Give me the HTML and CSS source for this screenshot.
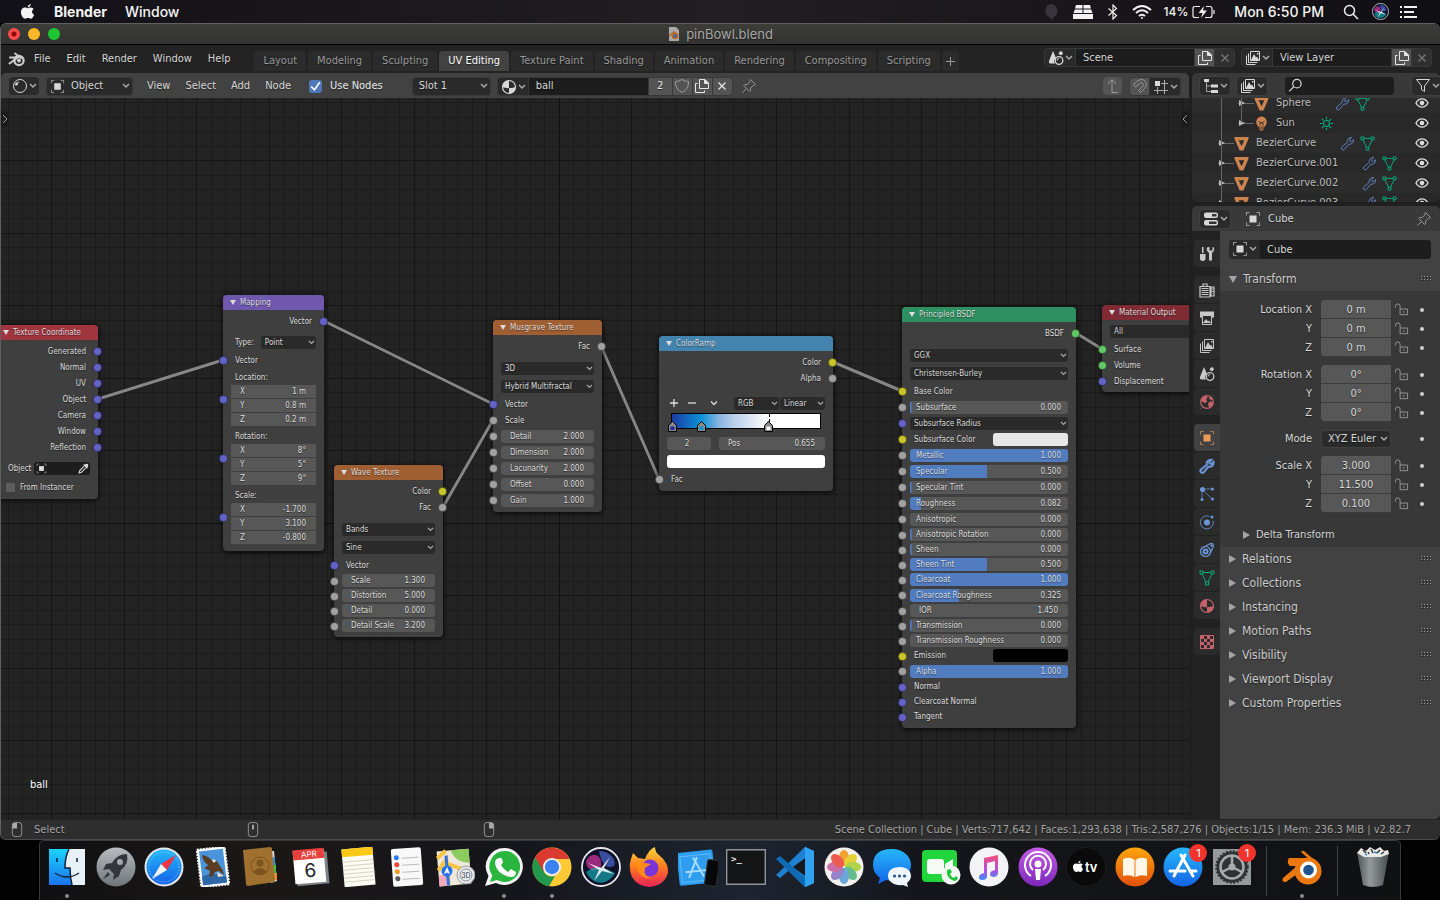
FILE: index.html
```html
<!DOCTYPE html>
<html lang="en">
<head>
<meta charset="utf-8">
<title>pinBowl.blend</title>
<link rel="stylesheet" href="styles.css">
</head>
<body>
<svg class="defs" aria-hidden="true">
  <symbol id="object" viewBox="0 0 16 16"><path d="M4.500 4.500h7v7h-7z" fill="currentColor"/><path d="M1.500 4.500v-3h3M11.500 1.500h3v3M14.500 11.500v3h-3M4.500 14.500h-3v-3" fill="none" stroke="currentColor" opacity=".65"/></symbol>
  <symbol id="dup" viewBox="0 0 16 16" fill="none" stroke="currentColor"><path d="M5.500 1.500h5.500l3.500 3.500v5.500h-9z"/><path d="M10.500 1.500v4h4z" fill="currentColor"/><path d="M3.500 5.500h-2v9h9v-2"/></symbol>
  <symbol id="close" viewBox="0 0 16 16"><path d="M4.500 4.500l7 7M11.500 4.500l-7 7" stroke="currentColor" stroke-width="1.300"/></symbol>
  <symbol id="pin" viewBox="0 0 16 16" fill="none" stroke="currentColor"><path d="M9.500 1.500l5 5-1 1-1-.3-3 3 .2 2.300-1 1-6-6 1-1 2.300.2 3-3-.4-1z"/><path d="M5.500 10.500l-4 4"/></symbol>
  <symbol id="wrench" viewBox="0 0 16 16" fill="none" stroke="currentColor"><path d="M12.500 1.800a4 4 0 0 0-4.700 5L2 11.500a1.900 1.900 0 1 0 2.700 2.700L9.500 8.600a4 4 0 0 0 5-4.700L12.300 6 10.500 5.500 10.200 4z"/></symbol>
  <symbol id="mesh" viewBox="0 0 16 16" fill="none" stroke="currentColor"><path d="M1 1h3v3H1zM12 1h3v3h-3zM6.500 12h3v3h-3zM4 2.500h8M3 4l4 8M13 4l-4 8"/></symbol>
  <symbol id="cone" viewBox="0 0 16 16"><path d="M.5 1h15v2L10 15.500H6L.5 3zM5 4.500l3 6.500 3-6.500z" fill="currentColor" fill-rule="evenodd"/></symbol>
  <symbol id="bulb" viewBox="0 0 16 16"><path d="M8 .5a6 6 0 0 0-4 10l.5 1h7l.5-1A6 6 0 0 0 8 .5z" fill="currentColor"/><path d="M5 5.500l1.500 1.500h3L11 5.500M6.500 7v3M9.500 7v3" stroke="#282828" fill="none"/><path d="M5 12.800h6M6 14.800h4" stroke="currentColor" stroke-width="1.200"/></symbol>
  <symbol id="sun" viewBox="0 0 16 16" fill="none" stroke="currentColor" stroke-width="1.200"><circle cx="8" cy="8" r="3.200"/><path d="M8 1v2.500M8 12.500V15M1 8h2.500M12.500 8H15M3 3l2 2M11 11l2 2M13 3l-2 2M5 11l-2 2"/></symbol>
  <symbol id="eye" viewBox="0 0 16 16"><path d="M2 8c3-5.500 9-5.500 12 0-3 5.500-9 5.500-12 0z" fill="none" stroke="currentColor" stroke-width="1.400"/><circle cx="8" cy="8" r="2.300" fill="currentColor"/></symbol>
  <symbol id="lock" viewBox="0 0 16 16" fill="none" stroke="currentColor"><path d="M6.500 7.500h8v6h-8zM10.500 9.500v2M1.500 6V4.500a2.500 2.500 0 0 1 5 0v3"/></symbol>
  <symbol id="grip" viewBox="0 0 12 6"><path d="M0 1.500h1M3 1.500h1M6 1.500h1M9 1.500h1M0 4.500h1M3 4.500h1M6 4.500h1M9 4.500h1" stroke="#1c1c1c"/><path d="M1 .5h1M4 .5h1M7 .5h1M10 .5h1M1 3.500h1M4 3.500h1M7 3.500h1M10 3.500h1" stroke="#999"/></symbol>
  <symbol id="layers" viewBox="0 0 16 16"><path d="M5.500 1.500h9v9h-9z" fill="none" stroke="currentColor"/><path d="M6 10l3-6 2 3.500 1-1L14 10zM12 3h1.500v1.500H12z" fill="currentColor"/><path d="M3.500 3.500v9h9M1.500 5.500v9h9" fill="none" stroke="currentColor"/></symbol>
  <symbol id="scene" viewBox="0 0 16 16"><path d="M5 1l3 7a4 4 0 0 0-1 5.500H2.500Q.5 13.500 1 11z" fill="currentColor"/><circle cx="11" cy="10.500" r="3.800" fill="none" stroke="currentColor" stroke-width="1.300"/><circle cx="12.800" cy="3.200" r="1.900" fill="currentColor"/><path d="M9 10.500a2 2 0 0 1 2-2" stroke="currentColor" fill="none"/></symbol>
  <symbol id="material" viewBox="0 0 16 16"><circle cx="8" cy="8" r="6.500" fill="none" stroke="currentColor" stroke-width="1.200"/><path d="M8 8V1.500A6.500 6.500 0 0 0 1.500 8q3 1.500 6.500 1v5.500A6.500 6.500 0 0 0 14.500 8Q12 9.200 8 9z" fill="currentColor"/></symbol>
  <symbol id="search" viewBox="0 0 16 16" fill="none" stroke="currentColor" stroke-width="1.300"><circle cx="9.500" cy="6" r="4.500"/><path d="M6.200 9.300l-5 5"/></symbol>
  <symbol id="blend" viewBox="0 0 20 16"><path d="M3 6.500h8M8 2.500l6 4.500M2.500 12.500L10 7" stroke="currentColor" stroke-width="2" stroke-linecap="round"/><circle cx="12" cy="9.500" r="4.600" fill="none" stroke="currentColor" stroke-width="2.200"/><circle cx="12" cy="9.500" r="2" fill="currentColor"/></symbol>
  <symbol id="house" viewBox="0 0 9 11"><path d="M.5 4.500L4.500.5l4 4v6h-8z" fill="#8a8a8a" stroke="#000"/><path d="M2.500 5.500h4v3.500h-4z" fill="currentColor"/></symbol>
  <symbol id="siri" viewBox="0 0 40 40"><circle cx="20" cy="20" r="19" fill="#0d1026" stroke="#e4e4ea" stroke-width="1.800"/><path d="M5 14C10 4 22 6 20 21 14 25 5 24 5 14z" fill="#b4308c" opacity=".85"/><path d="M18 4c10 0 18 8 15 15-6 3-12 1-15-15z" fill="#5f7fff" opacity=".55"/><path d="M5 25c10-8 20-4 29 1-6 12-22 14-29-1z" fill="#18bfc8" opacity=".6"/><path d="M20 21L7 16l11 7-5 11 8-10 12 3-10-6 6-11z" fill="#fff" opacity=".85"/></symbol>
  <symbol id="apple" viewBox="0 0 16 18"><path d="M11.500 1c0 2-1.500 3.500-3.200 3.600C8 3 9.700 1.200 11.500 1zM8.200 5.500c.9 0 2-.9 3.400-.8 1.300.1 2.300.6 3 1.600-2.600 1.700-2.200 5 .5 6.100-.8 2-2.200 4.300-3.600 4.300-1.200 0-1.600-.7-3-.7s-1.900.7-3 .7C3.200 16.700 1 12.800 1 9.800 1 6.600 3 4.800 5.100 4.800c1.300 0 2.300.7 3.100.7z" fill="currentColor"/></symbol>
</svg>

<header class="menubar">
  <svg class="apple" viewBox="0 0 16 18"><use href="#apple"/></svg>
  <strong>Blender</strong><span>Window</span>
  <div class="tray">
    <svg width="16" height="18" viewBox="0 0 16 18"><path d="M8 1a7 7 0 0 1 3 13l-2 3-2-2.500A7 7 0 0 1 8 1z" fill="#37343b"/></svg>
    <svg width="22" height="16" viewBox="0 0 22 16" fill="#f2f2f2"><path d="M4 1h6.500v3.500H3zM11.500 1H18l1 3.500h-7.500zM2.800 5.500h7.700V9H1.500zM11.500 5.500h7.700L20.500 9h-9zM1 10h20v5H1z"/></svg>
    <svg width="12" height="16" viewBox="0 0 12 16" fill="none" stroke="#eee" stroke-width="1.200"><path d="M1.500 4.500l8 7L6 15V1l3.500 3.500-8 7"/></svg>
    <svg width="20" height="16" viewBox="0 0 20 16" fill="none" stroke="#f2f2f2" stroke-width="2"><path d="M1 6q9-8 18 0M4 9q6-5.500 12 0M7 12q3-2.500 6 0"/><circle cx="10" cy="14" r="1" fill="#f2f2f2" stroke="none"/></svg>
    <span class="charge">14%</span>
    <svg class="battery" width="24" height="14" viewBox="0 0 24 14" fill="none" stroke="#eee" stroke-width="1.200"><path d="M8 1.500H3Q1 1.500 1 3.500v7q0 2 2 2h4M14 1.500h4q2 0 2 2v7q0 2-2 2h-5"/><path d="M12 1L6.500 8h4L9 13l6-7.500h-4z" fill="#eee" stroke="none"/><path d="M22 5v4"/></svg>
    <span class="clock">Mon 6:50 PM</span>
    <svg width="16" height="16" viewBox="0 0 16 16" fill="none" stroke="#eee" stroke-width="1.500"><circle cx="6.500" cy="6.500" r="5"/><path d="M10 10l5 5"/></svg>
    <svg width="17" height="17"><use href="#siri"/></svg>
    <svg width="18" height="14" viewBox="0 0 18 14" stroke="#f2f2f2" stroke-width="2"><path d="M0 2h2M4 2h13M0 7h2M4 7h10M0 12h2M4 12h13"/></svg>
  </div>
</header>

<main class="window">
  <div class="titlebar">
    <div class="lights"><button class="light red" aria-label="Close"></button><button class="light yellow" aria-label="Minimise"></button><button class="light green" aria-label="Zoom"></button></div>
    <svg width="12" height="14" viewBox="0 0 12 14"><path d="M1 0h7l3 3v11H1z" fill="#aaa"/><path d="M1 9l5-4 4 3" fill="none" stroke="#b86a20" stroke-width="1.500"/><circle cx="7" cy="9" r="2.600" fill="#45689c" stroke="#c06a20" stroke-width="1.400"/></svg>
    <h1>pinBowl.blend</h1>
  </div>

  <nav class="topbar">
    <div class="menus">
      <svg class="logo" width="20" height="16"><use href="#blend"/></svg>
      <button>File</button><button>Edit</button><button>Render</button><button>Window</button><button>Help</button>
    </div>
    <div class="tabs">
      <button>Layout</button><button>Modeling</button><button>Sculpting</button><button class="active">UV Editing</button><button>Texture Paint</button><button>Shading</button><button>Animation</button><button>Rendering</button><button>Compositing</button><button>Scripting</button><button class="plus" aria-label="Add workspace"><svg width="9" height="9" viewBox="0 0 9 9"><path d="M4.500 0v9M0 4.500h9" stroke="#999"/></svg></button>
    </div>
    <div class="blocks">
      <div class="group scene"><button class="pick" aria-label="Browse scene"><svg><use href="#scene"/></svg></button><input aria-label="Scene name" value="Scene"><button class="sq" aria-label="New scene"><svg><use href="#dup"/></svg></button><button class="sq off" aria-label="Delete scene"><svg><use href="#close"/></svg></button></div>
      <div class="group scene"><button class="pick" aria-label="Browse view layer"><svg><use href="#layers"/></svg></button><input aria-label="View layer name" value="View Layer"><button class="sq" aria-label="New view layer"><svg><use href="#dup"/></svg></button><button class="sq off" aria-label="Delete view layer"><svg><use href="#close"/></svg></button></div>
    </div>
  </nav>

  <div class="areas">
    <section class="editor">
      <div class="toolbar">
        <button class="pick" aria-label="Editor type"><svg viewBox="0 0 16 16" fill="none" stroke="currentColor"><circle cx="8" cy="8" r="6.500"/><path d="M4 7.500q0-3 3-3.500"/><circle cx="4.500" cy="6" r="1" fill="currentColor"/></svg></button>
        <div class="mode"><svg><use href="#object"/></svg><select aria-label="Shader type"><option>Object</option></select></div>
        <div class="links"><button>View</button><button>Select</button><button>Add</button><button>Node</button></div>
        <label class="check"><input type="checkbox" checked>Use Nodes</label>
        <select class="slot" aria-label="Material slot"><option>Slot 1</option></select>
        <div class="group mat"><button class="pick" aria-label="Browse material"><svg><use href="#material"/></svg></button><input aria-label="Material name" value="ball"><button class="sq users">2</button><button class="sq" aria-label="Fake user"><svg class="dim" viewBox="0 0 16 16" fill="none" stroke="currentColor"><path d="M8 1.500Q5 3.500 1.500 3.500 1 11 8 14.500 15 11 14.500 3.500 11 3.500 8 1.500z"/></svg></button><button class="sq" aria-label="New material"><svg><use href="#dup"/></svg></button><button class="sq" aria-label="Unlink material"><svg><use href="#close"/></svg></button></div>
        <button class="bare" aria-label="Pin"><svg><use href="#pin"/></svg></button>
        <div class="right">
          <button class="sq dim solo" aria-label="Parent node tree"><svg viewBox="0 0 16 16" fill="none" stroke="currentColor"><path d="M3 6l4-4.500L11 6M7 2v12.500h6"/></svg></button>
          <div class="group snap"><button class="sq dim" aria-label="Snap"><svg viewBox="0 0 16 16" fill="none" stroke="currentColor"><path d="M1.500 6.500l4-3.500c6-4.500 12 2.500 7 7.500l-4 4-2-2 4-4c2-2.500-.5-5-3-3L3.500 9z"/></svg></button><button class="pick" aria-label="Snap element"><svg viewBox="0 0 16 16"><path d="M2 2h5v5H2z" fill="currentColor"/><path d="M4.500 8v7M11.500 1v14M8 4.500h7M1 11.500h14" stroke="currentColor" opacity=".75"/></svg></button></div>
        </div>
      </div>

      <div class="canvas">
        <svg class="grid" width="100%" height="100%">
          <defs><pattern id="lines" x="50" y="62" width="145" height="145" patternUnits="userSpaceOnUse">
            <path d="M15.500 0v145M29.500 0v145M44.500 0v145M58.500 0v145M87.500 0v145M102.500 0v145M116.500 0v145M131.500 0v145M0 15.500h145M0 29.500h145M0 44.500h145M0 58.500h145M0 87.500h145M0 102.500h145M0 116.500h145M0 131.500h145" stroke="#1b1b1b"/>
            <path d="M.5 0v145M73.500 0v145M0 .5h145M0 73.500h145" stroke="#151515"/>
          </pattern></defs>
          <rect width="100%" height="100%" fill="url(#lines)"/>
          <path d="M558.500 0v2000M0 425.500h4000" stroke="#101010"/>
          <g fill="none" stroke="#1a1a1a" stroke-width="4"><path id="wires" d="M97 301L222 262M323 223L492 306M442 409L492 322M600 248L658 381M832 264L901 293M1075 235L1101 251"/></g>
          <use href="#wires" class="wire"/>
        </svg>

        <article class="node texcoord">
          <h2>Texture Coordinate</h2>
          <div class="body">
            <p class="row out blue">Generated</p><p class="row out blue">Normal</p><p class="row out blue">UV</p><p class="row out blue">Object</p><p class="row out blue">Camera</p><p class="row out blue">Window</p><p class="row out blue">Reflection</p>
            <div class="row target space-5"><span>Object</span><button class="eyedrop" aria-label="Object"><svg><use href="#object"/></svg><svg viewBox="0 0 16 16"><path d="M10 2.500Q12 0 14.500 1.500 16 4 13.500 6l1 1-1.500 1.500L7.500 3 9 1.500z" fill="currentColor"/><path d="M8.500 5L2.500 11l-1 3.500L5 13.500 11 7.500" fill="none" stroke="currentColor" stroke-width="1.500"/></svg></button></div>
            <label class="row instancer space-3"><input type="checkbox">From Instancer</label>
          </div>
        </article>

        <article class="node mapping">
          <h2>Mapping</h2>
          <div class="body">
            <p class="row out blue">Vector</p>
            <label class="row type space-5">Type:<select><option>Point</option></select></label>
            <p class="row in blue space-2">Vector</p>
            <p class="row head space-1">Location:</p>
            <div class="triple"><label class="field">X<input value="1 m"></label><label class="field">Y<input value="0.8 m"></label><label class="field">Z<input value="0.2 m"></label></div>
            <p class="row head tight space-2">Rotation:</p>
            <div class="triple"><label class="field">X<input value="8°"></label><label class="field">Y<input value="5°"></label><label class="field">Z<input value="9°"></label></div>
            <p class="row head tight space-2">Scale:</p>
            <div class="triple"><label class="field">X<input value="-1.700"></label><label class="field">Y<input value="3.100"></label><label class="field">Z<input value="-0.800"></label></div>
          </div>
        </article>

        <article class="node wave">
          <h2>Wave Texture</h2>
          <div class="body">
            <p class="row out yellow">Color</p><p class="row out gray">Fac</p>
            <div class="row tall space-5"><select aria-label="Wave type"><option>Bands</option></select></div>
            <div class="row tall"><select aria-label="Wave profile"><option>Sine</option></select></div>
            <p class="row in blue space-1">Vector</p>
            <div class="row in gray tight"><label class="field">Scale<input value="1.300"></label></div>
            <div class="row in gray tight"><label class="field">Distortion<input value="5.000"></label></div>
            <div class="row in gray tight"><label class="field">Detail<input value="0.000"></label></div>
            <div class="row in gray tight"><label class="field">Detail Scale<input value="3.200"></label></div>
          </div>
        </article>

        <article class="node musgrave">
          <h2>Musgrave Texture</h2>
          <div class="body">
            <p class="row out gray">Fac</p>
            <div class="row tall space-5"><select aria-label="Dimensions"><option>3D</option></select></div>
            <div class="row tall"><select aria-label="Musgrave type"><option>Hybrid Multifractal</option></select></div>
            <p class="row in blue space-1">Vector</p><p class="row in gray">Scale</p>
            <div class="row in gray"><label class="field">Detail<input value="2.000"></label></div>
            <div class="row in gray"><label class="field">Dimension<input value="2.000"></label></div>
            <div class="row in gray"><label class="field">Lacunarity<input value="2.000"></label></div>
            <div class="row in gray"><label class="field">Offset<input value="0.000"></label></div>
            <div class="row in gray"><label class="field">Gain<input value="1.000"></label></div>
          </div>
        </article>

        <article class="node ramp">
          <h2>ColorRamp</h2>
          <div class="body">
            <p class="row out yellow">Color</p><p class="row out gray">Alpha</p>
            <div class="tools">
              <button aria-label="Add stop"><svg viewBox="0 0 8 8"><path d="M4 0v8M0 4h8" stroke="currentColor" stroke-width="1.300"/></svg></button>
              <button aria-label="Remove stop"><svg viewBox="0 0 8 8"><path d="M0 4h8" stroke="currentColor" stroke-width="1.300"/></svg></button>
              <button aria-label="Tools"><svg viewBox="0 0 8 8"><path d="M1 2.500l3 3 3-3" fill="none" stroke="currentColor" stroke-width="1.300"/></svg></button>
              <div class="pair"><select aria-label="Color mode"><option>RGB</option></select><select aria-label="Interpolation"><option>Linear</option></select></div>
            </div>
            <div class="gradient">
              <svg class="stop navy" style="left:1%"><use href="#house"/></svg>
              <svg class="stop sky" style="left:20%"><use href="#house"/></svg>
              <svg class="stop white" style="left:65.5%"><use href="#house"/></svg>
            </div>
            <div class="stopinfo"><input class="index" aria-label="Active stop" value="2"><label class="field">Pos<input value="0.655"></label></div>
            <input class="swatch full" type="color" value="#ffffff" aria-label="Stop color">
            <p class="row in gray space-3">Fac</p>
          </div>
        </article>

        <article class="node bsdf">
          <h2>Principled BSDF</h2>
          <div class="body">
            <p class="row out lime">BSDF</p>
            <div class="row tall space-5"><select aria-label="Distribution"><option>GGX</option></select></div>
            <div class="row tall"><select aria-label="Subsurface method"><option>Christensen-Burley</option></select></div>
            <p class="row in yellow space-1">Base Color</p>
            <div class="row in gray"><label class="field slide" style="--fill:1%">Subsurface<input value="0.000"></label></div>
            <div class="row in blue"><select aria-label="Subsurface Radius"><option>Subsurface Radius</option></select></div>
            <label class="row in yellow color">Subsurface Color<input class="swatch" type="color" value="#e7e7e7"></label>
            <div class="row in gray"><label class="field slide" style="--fill:100%">Metallic<input value="1.000"></label></div>
            <div class="row in gray"><label class="field slide" style="--fill:49%">Specular<input value="0.500"></label></div>
            <div class="row in gray"><label class="field slide" style="--fill:1%">Specular Tint<input value="0.000"></label></div>
            <div class="row in gray"><label class="field slide" style="--fill:7%">Roughness<input value="0.082"></label></div>
            <div class="row in gray"><label class="field slide" style="--fill:0%">Anisotropic<input value="0.000"></label></div>
            <div class="row in gray tight"><label class="field slide" style="--fill:1%">Anisotropic Rotation<input value="0.000"></label></div>
            <div class="row in gray tight"><label class="field slide" style="--fill:1%">Sheen<input value="0.000"></label></div>
            <div class="row in gray tight"><label class="field slide" style="--fill:49%">Sheen Tint<input value="0.500"></label></div>
            <div class="row in gray tight"><label class="field slide" style="--fill:100%">Clearcoat<input value="1.000"></label></div>
            <div class="row in gray"><label class="field slide" style="--fill:31%">Clearcoat Roughness<input value="0.325"></label></div>
            <div class="row in gray tight"><label class="field">IOR<input value="1.450"></label></div>
            <div class="row in gray tight"><label class="field slide" style="--fill:1%">Transmission<input value="0.000"></label></div>
            <div class="row in gray tight"><label class="field slide" style="--fill:0%">Transmission Roughness<input value="0.000"></label></div>
            <label class="row in yellow tight color">Emission<input class="swatch" type="color" value="#000000"></label>
            <div class="row in gray"><label class="field slide" style="--fill:100%">Alpha<input value="1.000"></label></div>
            <p class="row in blue tight">Normal</p><p class="row in blue tight">Clearcoat Normal</p><p class="row in blue tight">Tangent</p>
          </div>
        </article>

        <article class="node output">
          <h2>Material Output</h2>
          <div class="body">
            <div class="row tall"><select aria-label="Target"><option>All</option></select></div>
            <p class="row in lime space-1">Surface</p><p class="row in lime">Volume</p><p class="row in blue">Displacement</p>
          </div>
        </article>

        <button class="edge left" aria-label="Show toolbar"><svg viewBox="0 0 6 10"><path d="M1 1l4 4-4 4" fill="none" stroke="currentColor"/></svg></button>
        <button class="edge rightside" aria-label="Show sidebar"><svg viewBox="0 0 6 10"><path d="M5 1L1 5l4 4" fill="none" stroke="currentColor"/></svg></button>
        <span class="caption">ball</span>
      </div>
    </section>

    <aside class="side">
      <section class="outliner">
        <div class="toolbar">
          <button class="pick" aria-label="Editor type"><svg viewBox="0 0 16 16"><path d="M1 1h5v3H1zM8 6.500h7v3H8zM8 12h7v3H8z" fill="currentColor"/><path d="M3.500 4v9.500H8M3.500 8H8" fill="none" stroke="currentColor" opacity=".7"/></svg></button>
          <button class="pick" aria-label="Display mode"><svg><use href="#layers"/></svg></button>
          <label class="search"><svg><use href="#search"/></svg><input aria-label="Filter"></label>
          <button class="pick filter" aria-label="Filter options"><svg viewBox="0 0 16 16" fill="none" stroke="currentColor"><path d="M1.500 1.500h13L9.500 8v5.500l-3-2V8z"/></svg></button>
        </div>
        <div class="treebox">
          <ul class="tree">
            <li class="deep"><i></i><svg class="orange"><use href="#cone"/></svg><span>Sphere</span><svg class="steel"><use href="#wrench"/></svg><svg class="teal"><use href="#mesh"/></svg><svg class="eye"><use href="#eye"/></svg></li>
            <li class="deep sun"><i></i><svg class="orange"><use href="#bulb"/></svg><span>Sun</span><svg class="teal"><use href="#sun"/></svg><svg class="eye"><use href="#eye"/></svg></li>
            <li><i></i><svg class="orange"><use href="#cone"/></svg><span>BezierCurve</span><svg class="steel"><use href="#wrench"/></svg><svg class="teal"><use href="#mesh"/></svg><svg class="eye"><use href="#eye"/></svg></li>
            <li><i></i><svg class="orange"><use href="#cone"/></svg><span>BezierCurve.001</span><svg class="steel"><use href="#wrench"/></svg><svg class="teal"><use href="#mesh"/></svg><svg class="eye"><use href="#eye"/></svg></li>
            <li><i></i><svg class="orange"><use href="#cone"/></svg><span>BezierCurve.002</span><svg class="steel"><use href="#wrench"/></svg><svg class="teal"><use href="#mesh"/></svg><svg class="eye"><use href="#eye"/></svg></li>
            <li><i></i><svg class="orange"><use href="#cone"/></svg><span>BezierCurve.003</span><svg class="steel"><use href="#wrench"/></svg><svg class="teal"><use href="#mesh"/></svg><svg class="eye"><use href="#eye"/></svg></li>
          </ul>
        </div>
      </section>

      <section class="props">
        <div class="toolbar">
          <button class="pick" aria-label="Editor type"><svg viewBox="0 0 16 16"><rect x="1" y="1.500" width="14" height="5.500" rx="2" fill="currentColor"/><rect x="1" y="9" width="14" height="5.500" rx="2" fill="currentColor"/><path d="M9 3h4.500v2.500H9zM6 10.500h7.500V13H6z" fill="#333"/></svg></button>
          <svg class="crumb"><use href="#object"/></svg><span>Cube</span>
          <button class="bare" aria-label="Pin"><svg><use href="#pin"/></svg></button>
        </div>
        <div class="split">
          <nav class="strip">
            <button aria-label="Tool"><svg viewBox="0 0 16 16"><path d="M3 1h1.500v6H3z" fill="currentColor"/><path d="M1 8h5.500v5.500q-2.700 3-5.500 0zM8 1.500q-1 4 2 5.500v7.500h3V7q3-1.500 2-5.500L13.500 1v3.500h-3V1z" fill="currentColor"/></svg></button>
            <button class="first" aria-label="Render"><svg viewBox="0 0 16 16"><path d="M1 4.500h10V15H1zM4 4V2h4v2M12 5h3v9h-3z" fill="none" stroke="currentColor" stroke-width="1.200"/><path d="M2.500 6.500h7M2.500 8.500h7M2.500 10.500h7M2.500 12.500h7M12.500 7h2M12.500 9.500h2" stroke="currentColor"/></svg></button>
            <button aria-label="Output"><svg viewBox="0 0 16 16"><path d="M1 1.500h14v6h-2V5H3v2.500H1z" fill="currentColor"/><path d="M3.500 5.500h9v9h-9z" fill="none" stroke="currentColor"/><path d="M4 13l3-4 2 2.500 1-1 2 2.500z" fill="currentColor"/></svg></button>
            <button aria-label="View layer"><svg><use href="#layers"/></svg></button>
            <button aria-label="Scene"><svg><use href="#scene"/></svg></button>
            <button class="rose" aria-label="World"><svg viewBox="0 0 16 16"><circle cx="8" cy="8" r="6.300" fill="none" stroke="currentColor" stroke-width="1.200"/><path d="M2 5l4-3 2.500 1L7 5.500l1 2L6 9 2.500 7zM9.500 9l2-1.500 2.500 1-1 3-2 1.500-1.500-1zM11 3l2.500 2-1 1L10 4.500zM14 1l1 1M1 15l1.500-1.500" fill="currentColor" stroke="currentColor" stroke-width=".5"/></svg></button>
            <button class="first active amber" aria-label="Object"><svg><use href="#object"/></svg></button>
            <button class="azure" aria-label="Modifiers"><svg class="solid"><use href="#wrench"/></svg></button>
            <button class="azure" aria-label="Particles"><svg viewBox="0 0 16 16"><circle cx="3.500" cy="3.500" r="2.500" fill="currentColor"/><circle cx="13.500" cy="3" r="1.500" fill="currentColor"/><circle cx="13.500" cy="13" r="1.500" fill="currentColor"/><circle cx="3" cy="13.500" r="1.500" fill="currentColor"/><path d="M3.500 3L13 3M3.500 3.500L13 13M3 4v9" stroke="currentColor" opacity=".7"/></svg></button>
            <button class="azure" aria-label="Physics"><svg viewBox="0 0 16 16"><circle cx="8" cy="8.500" r="3" fill="currentColor"/><path d="M10.500 2.500A6.500 6.500 0 1 0 14 6.500" fill="none" stroke="currentColor" opacity=".8"/><circle cx="13" cy="3" r="1.500" fill="currentColor"/></svg></button>
            <button class="azure" aria-label="Constraints"><svg viewBox="0 0 16 16" fill="none" stroke="currentColor" stroke-width="1.200"><circle cx="6.500" cy="9.500" r="5"/><circle cx="6.500" cy="9.500" r="2" stroke-width="2"/><path d="M3 6l8.500-4.500q3-.5 3 2.500L11 12"/><circle cx="12.500" cy="3.500" r=".6"/></svg></button>
            <button class="teal" aria-label="Object data"><svg><use href="#mesh"/></svg></button>
            <button class="rose" aria-label="Material"><svg><use href="#material"/></svg></button>
            <button class="first rose" aria-label="Texture"><svg viewBox="0 0 16 16"><path d="M1.500 1.500h13v13h-13z" fill="none" stroke="currentColor"/><path d="M2 2h3v3H2zM8 2h3v3H8zM5 5h3v3H5zM11 5h3v3h-3zM2 8h3v3H2zM8 8h3v3H8zM5 11h3v3H5zM11 11h3v3h-3z" fill="currentColor"/></svg></button>
          </nav>
          <div class="panels">
            <div class="group datablock"><button class="pick" aria-label="Browse object"><svg><use href="#object"/></svg></button><input aria-label="Object name" value="Cube"></div>
            <h3 class="open">Transform<svg><use href="#grip"/></svg></h3>
            <div class="transform">
              <div class="vector">
                <div class="line"><label for="lx">Location X</label><input id="lx" value="0 m"><svg><use href="#lock"/></svg><b></b></div>
                <div class="line"><label for="ly">Y</label><input id="ly" value="0 m"><svg><use href="#lock"/></svg><b></b></div>
                <div class="line"><label for="lz">Z</label><input id="lz" value="0 m"><svg><use href="#lock"/></svg><b></b></div>
              </div>
              <div class="vector">
                <div class="line"><label for="rx">Rotation X</label><input id="rx" value="0°"><svg><use href="#lock"/></svg><b></b></div>
                <div class="line"><label for="ry">Y</label><input id="ry" value="0°"><svg><use href="#lock"/></svg><b></b></div>
                <div class="line"><label for="rz">Z</label><input id="rz" value="0°"><svg><use href="#lock"/></svg><b></b></div>
              </div>
              <div class="line single"><label for="rm">Mode</label><select id="rm"><option>XYZ Euler</option></select><b></b></div>
              <div class="vector">
                <div class="line"><label for="sx">Scale X</label><input id="sx" value="3.000"><svg><use href="#lock"/></svg><b></b></div>
                <div class="line"><label for="sy">Y</label><input id="sy" value="11.500"><svg><use href="#lock"/></svg><b></b></div>
                <div class="line"><label for="sz">Z</label><input id="sz" value="0.100"><svg><use href="#lock"/></svg><b></b></div>
              </div>
              <h4>Delta Transform</h4>
            </div>
            <h3>Relations<svg><use href="#grip"/></svg></h3>
            <h3>Collections<svg><use href="#grip"/></svg></h3>
            <h3>Instancing<svg><use href="#grip"/></svg></h3>
            <h3>Motion Paths<svg><use href="#grip"/></svg></h3>
            <h3>Visibility<svg><use href="#grip"/></svg></h3>
            <h3>Viewport Display<svg><use href="#grip"/></svg></h3>
            <h3>Custom Properties<svg><use href="#grip"/></svg></h3>
          </div>
        </div>
      </section>
    </aside>
  </div>

  <footer class="status">
    <div class="hint"><svg viewBox="0 0 12 16"><rect x="1" y=".5" width="10" height="15" rx="3" fill="none" stroke="#999"/><path d="M1 7V3q0-2 2-2h3v6z" fill="#aaa"/></svg>Select</div>
    <div class="hint"><svg viewBox="0 0 12 16"><rect x="1" y=".5" width="10" height="15" rx="3" fill="none" stroke="#999"/><rect x="5" y="3" width="2" height="5" fill="#aaa"/></svg></div>
    <div class="hint"><svg viewBox="0 0 12 16"><rect x="1" y=".5" width="10" height="15" rx="3" fill="none" stroke="#999"/><path d="M11 7V3q0-2-2-2H6v6z" fill="#aaa"/></svg></div>
    <span>Scene Collection | Cube | Verts:717,642 | Faces:1,293,638 | Tris:2,587,276 | Objects:1/15 | Mem: 236.3 MiB | v2.82.7</span>
  </footer>
</main>

<nav class="dock">
  <svg class="defs"><defs>
    <linearGradient id="gBlue" x2="0" y2="1"><stop stop-color="#25b7fb"/><stop offset="1" stop-color="#1463e8"/></linearGradient>
    <linearGradient id="gFind" x2="0" y2="1"><stop stop-color="#1bd3fd"/><stop offset="1" stop-color="#1a73f0"/></linearGradient>
    <linearGradient id="gGray" x2="0" y2="1"><stop stop-color="#b8bcc0"/><stop offset="1" stop-color="#6e7478"/></linearGradient>
    <linearGradient id="gOrange" x2="0" y2="1"><stop stop-color="#fda50d"/><stop offset="1" stop-color="#e2500a"/></linearGradient>
    <linearGradient id="gPurple" x2="0" y2="1"><stop stop-color="#c65ce6"/><stop offset="1" stop-color="#7a28b8"/></linearGradient>
    <linearGradient id="gNote" x2="0" y2="1"><stop stop-color="#f64d78"/><stop offset=".6" stop-color="#b14fe0"/><stop offset="1" stop-color="#3a8df8"/></linearGradient>
    <linearGradient id="gFox" x2="0" y2="1"><stop stop-color="#ffd83a"/><stop offset=".5" stop-color="#ff7a1e"/><stop offset="1" stop-color="#e8205a"/></linearGradient>
    <linearGradient id="gTrash" x2="1"><stop stop-color="#555b5e"/><stop offset=".4" stop-color="#a4a9ab"/><stop offset="1" stop-color="#4c5254"/></linearGradient>
  </defs></svg>
  <button class="app on" aria-label="Finder"><svg viewBox="0 0 40 40"><path d="M2 2h36v36H2z" fill="#e9f1f8"/><path d="M2 2h20q-4 8-4 19h5q0 9 2 17H2z" fill="url(#gFind)"/><path d="M22 2q-4 8-4 19h5q0 9 2 17M10 11v4M30 11v4M8 26q12 8 24 0" fill="none" stroke="#123" stroke-width="1.500"/></svg></button>
  <button class="app" aria-label="Launchpad"><svg viewBox="0 0 40 40"><circle cx="20" cy="20" r="19.500" fill="url(#gGray)"/><path d="M31 7q-10 0-15 9l-6 1-3 6 6-1 5 5-1 6 6-4 2-6q8-6 6-16z" fill="#33373b"/><circle cx="24" cy="15" r="3" fill="#a4a8ac"/><path d="M12 25l-5 7 7-4z" fill="#33373b"/></svg></button>
  <button class="app" aria-label="Safari"><svg viewBox="0 0 40 40"><circle cx="20" cy="20" r="19.500" fill="#e6e9ec"/><circle cx="20" cy="20" r="17.500" fill="url(#gBlue)"/><circle cx="20" cy="20" r="15" fill="none" stroke="#a4dcff" stroke-dasharray="1 2"/><path d="M32 8L17 17l6 6z" fill="#f4333c"/><path d="M8 32l9-15 6 6z" fill="#f2f2f2"/></svg></button>
  <button class="app" aria-label="Mail"><svg viewBox="0 0 40 40"><g transform="rotate(-7 20 20)"><path d="M6 1h28v38H6z" fill="#fff" stroke="#fff" stroke-width="2" stroke-dasharray="2 1"/><path d="M8 3h24v34H8z" fill="#4a94dc"/><path d="M8 28q12-4 24 3v6H8z" fill="#2e68a8"/></g><path d="M9 8q7 1 11 7l4-1q2 4 3 5 3 3 4 9l-5-4-4 1-3 5-3-1 1-5-6-3q3-1 4-3-5-3-6-10z" fill="#5a3d22"/><path d="M19 13q2-2 4 1l-2 2zM24 25l7 4-6 1z" fill="#e9dfc8"/></svg></button>
  <button class="app" aria-label="Contacts"><svg viewBox="0 0 40 40"><path d="M28 4l5 0 3 30-6 2z" fill="#ddd"/><path d="M32 10h2v8h-2z" fill="#2b90d8"/><path d="M32 18h3v8h-3z" fill="#4dba45"/><path d="M33 26h3v7h-3z" fill="#e8912c"/><path d="M2 3L29 0q2 0 2 2l3 33-27 4q-2 0-2-2z" fill="#a0702f"/><circle cx="19" cy="19" r="9" fill="none" stroke="#7b5420"/><circle cx="19" cy="16" r="3.500" fill="#7b5420"/><path d="M12 25q7-8 14 0-7 6-14 0z" fill="#7b5420"/></svg></button>
  <button class="app" aria-label="Calendar"><svg viewBox="0 0 40 40"><g transform="rotate(-5 20 20)"><path d="M5 6h33v32H6z" fill="#7b8389"/><path d="M4 3h31v33H4z" fill="#fff"/><path d="M4 2h31v10H4z" fill="#e8403c"/><text x="20" y="10" class="month">APR</text><text x="20" y="30" class="day">6</text></g></svg></button>
  <button class="app" aria-label="Notes"><svg viewBox="0 0 40 40"><g transform="rotate(-5 20 20)"><path d="M5 1h31v38H5z" fill="#fdfcf4"/><path d="M5 1h31v8H5z" fill="#fcc916"/><path d="M5 14h31M5 18h31M5 22h31M5 26h31M5 30h31M5 34h31" stroke="#cfcab4" stroke-width=".8"/></g></svg></button>
  <button class="app" aria-label="Reminders"><svg viewBox="0 0 40 40"><g transform="rotate(-4 20 20)"><rect x="5" y="1" width="30" height="38" rx="2" fill="#f8f8f8"/><path d="M15 11h17M15 18h17M15 25h17M15 32h17" stroke="#bbb"/><circle cx="10" cy="10" r="2.500" fill="#2e7cf6"/><circle cx="10" cy="17" r="2.500" fill="#f0453a"/><circle cx="10" cy="24" r="2.500" fill="#f59a22"/><circle cx="10" cy="31" r="2.500" fill="#555"/></g></svg></button>
  <button class="app" aria-label="Maps"><svg viewBox="0 0 40 40"><g transform="rotate(-5 20 20)"><path d="M3 3h32v35H3z" fill="#eee9dc"/><path d="M17 3h18v14q-14-1-18-14z" fill="#8ccb5e"/><path d="M3 10l9-7M12 38V12L3 22M12 16l22 10" stroke="#f6c644" stroke-width="4" fill="none"/><path d="M3 27h8v11H3z" fill="#f2a9bb"/><path d="M12 38V8" stroke="#2d72e0" stroke-width="3"/></g><circle cx="12" cy="24" r="5.500" fill="#2672e8"/><path d="M12 20l3 7-3-1.500L9 27z" fill="#fff"/><circle cx="31" cy="28" r="9" fill="#e8e9eb" stroke="#999"/><circle cx="31" cy="28" r="6" fill="none" stroke="#667" stroke-width=".7"/><text x="31" y="31" class="three">3D</text></svg></button>
  <button class="app on" aria-label="WhatsApp"><svg viewBox="0 0 40 40"><path d="M21 1a18.500 18.500 0 1 1-9 35L1 39l3.500-10A18.500 18.500 0 0 1 21 1z" fill="#f4f4f4"/><path d="M21 4a15.500 15.500 0 1 1-8 29l-7 2 2.300-6.500A15.500 15.500 0 0 1 21 4z" fill="#29b53e"/><path d="M15 11q2-1 3 1l1 3q0 1-2 3 3 5 7 7l3-3 5 3q0 5-5 5-14-2-16-14 0-4 4-5z" fill="#fff"/></svg></button>
  <button class="app on" aria-label="Chrome"><svg viewBox="0 0 40 40"><circle cx="20" cy="20" r="19.500" fill="#fbc934"/><path d="M3 10.500A19.500 19.500 0 0 1 37.500 12H20l-9 13z" fill="#d93b30"/><path d="M3 10.500L12 25q4 6 11 4l-6 10.300A19.500 19.500 0 0 1 3 10.500z" fill="#22984d"/><circle cx="20" cy="20" r="9" fill="#f3f3f3"/><circle cx="20" cy="20" r="7.200" fill="#3b82f0"/></svg></button>
  <button class="app" aria-label="Siri"><svg><use href="#siri"/></svg></button>
  <button class="app" aria-label="Firefox"><svg viewBox="0 0 40 40"><path d="M2 12l2-6 5 5 7 1Q20 2 26 0q0 5 4 8 10 8 9 18-4 13-19 14Q3 38 1 23q-1-6 1-11z" fill="url(#gFox)"/><circle cx="21" cy="21" r="8.500" fill="#7a35d8"/><path d="M6 14l10 2 6 1-6 4q-2 8 6 10-13 2-16-17z" fill="#ff8a18"/></svg></button>
  <button class="app" aria-label="Simulator"><svg viewBox="0 0 40 40"><g transform="rotate(-6 20 20)"><rect x="0" y="4" width="36" height="33" rx="2" fill="#2f9df0"/><path d="M3 8h30v26H3z" fill="none" stroke="#76c6fa" stroke-width=".7"/><path d="M10 30L20 10M25 30L16 10M7 24h22" stroke="#a4dcff" stroke-width="2" fill="none"/></g><rect x="28" y="13" width="12" height="26" rx="2" transform="rotate(8 34 26)" fill="#07080a" stroke="#333"/></svg></button>
  <button class="app" aria-label="Terminal"><svg viewBox="0 0 40 40"><path d="M.7 2.700h38.600v34.600H.7z" fill="#141516" stroke="#8f9496" stroke-width="1.400"/><text x="5" y="15" class="prompt">&gt;_</text></svg></button>
  <button class="app" aria-label="Code"><svg viewBox="0 0 40 40"><path d="M30 0l9 4v32l-9 4L11 21z" fill="#2b9cec"/><path d="M30 10L5 31l-4-3 29-28z" fill="#1f7fd0"/><path d="M30 30L5 9l-4 3 29 28z" fill="#0f6bb5"/><path d="M30 11v18L18 20z" fill="#15181d"/><path d="M30 0l9 4v32l-9 4z" fill="#2fa3f2"/></svg></button>
  <button class="app" aria-label="Photos"><svg viewBox="0 0 40 40"><circle cx="20" cy="20" r="19.500" fill="#f3f1ee"/><g opacity=".9"><ellipse cx="20" cy="11" rx="5" ry="8" fill="#f79a1e"/><ellipse cx="20" cy="11" rx="5" ry="8" fill="#e6cf22" transform="rotate(45 20 20)"/><ellipse cx="20" cy="11" rx="5" ry="8" fill="#a8cf38" transform="rotate(90 20 20)"/><ellipse cx="20" cy="11" rx="5" ry="8" fill="#56b884" transform="rotate(135 20 20)"/><ellipse cx="20" cy="11" rx="5" ry="8" fill="#5aa2d8" transform="rotate(180 20 20)"/><ellipse cx="20" cy="11" rx="5" ry="8" fill="#8a78c8" transform="rotate(225 20 20)"/><ellipse cx="20" cy="11" rx="5" ry="8" fill="#c8609c" transform="rotate(270 20 20)"/><ellipse cx="20" cy="11" rx="5" ry="8" fill="#ef4a3e" transform="rotate(315 20 20)"/></g></svg></button>
  <button class="app" aria-label="Messages"><svg viewBox="0 0 40 40"><path d="M20 2c11 0 19 7 19 16S31 34 20 34l-6-1-8 4 2-6Q1 26 1 18 1 2 20 2z" fill="url(#gBlue)"/><path d="M28 20c7 0 11 4 11 9 0 3-2 5-4 7l1 4-5-2c-8 1-15-3-15-9s5-9 12-9z" fill="#eef6fb"/><circle cx="22.500" cy="29" r="1.600" fill="#24548c"/><circle cx="27.500" cy="29" r="1.600" fill="#24548c"/><circle cx="32.500" cy="29" r="1.600" fill="#24548c"/></svg></button>
  <button class="app" aria-label="FaceTime"><svg viewBox="0 0 40 40"><rect x="1" y="3" width="35" height="32" rx="4" fill="#20d63c"/><rect x="6" y="12" width="17" height="15" rx="3" fill="#f6faf6"/><path d="M24 17l8-5v15l-8-5z" fill="#f6faf6"/><circle cx="30" cy="28" r="9.500" fill="#f3f6f3"/><path d="M26 23l3-1 2 3-2 2q1 3 4 4l2-2 2 2q-1 3-4 3-8-3-7-11z" fill="#1fc43a"/></svg></button>
  <button class="app" aria-label="Music"><svg viewBox="0 0 40 40"><circle cx="20" cy="20" r="19.500" fill="#f3f3f6"/><path d="M15 11l14-3v18q0 3-4 4-4 0-4-3t5-4V14l-8 2v13q0 4-5 4-3 0-3-3t5-4z" fill="url(#gNote)"/></svg></button>
  <button class="app" aria-label="Podcasts"><svg viewBox="0 0 40 40"><circle cx="20" cy="20" r="19.500" fill="url(#gPurple)"/><circle cx="20" cy="17" r="3.500" fill="#fff"/><path d="M17 22h6l-1 11h-4z" fill="#fff"/><path d="M13 29A13 13 0 1 1 27 29M15 23A8 8 0 1 1 25 23" fill="none" stroke="#fff" stroke-width="2"/></svg></button>
  <button class="app" aria-label="TV"><svg viewBox="0 0 40 40"><circle cx="20" cy="20" r="19.500" fill="#0a0a0b" stroke="#1e1e20"/><svg x="6" y="13" width="12" height="13" color="#fff"><use href="#apple"/></svg><text x="19" y="25" class="tv">tv</text></svg></button>
  <button class="app" aria-label="Books"><svg viewBox="0 0 40 40"><circle cx="20" cy="20" r="19.500" fill="url(#gOrange)"/><path d="M8 12q7-3 11.500 1v17q-5-3-11.500-1zM32 12q-7-3-11.500 1v17q5-3 11.500-1z" fill="#fff7ea"/></svg></button>
  <button class="app" aria-label="App Store"><svg viewBox="0 0 40 40"><circle cx="20" cy="20" r="19.500" fill="url(#gBlue)"/><path d="M22 8L11 29M18 8l12 21M7 24h15M27 24h6" stroke="#fff" stroke-width="3" stroke-linecap="round"/></svg><em>1</em></button>
  <button class="app" aria-label="System Preferences"><svg viewBox="0 0 40 40"><path d="M1 2h38v36H1z" fill="#969a9d"/><circle cx="20" cy="20" r="15.500" fill="#303234" stroke="#303234" stroke-width="2.500" stroke-dasharray="2 1.500"/><circle cx="20" cy="20" r="11.500" fill="none" stroke="#a8acae" stroke-width="2.500"/><circle cx="20" cy="20" r="3.500" fill="#a8acae"/><path d="M20 20V9M20 20l10 5M20 20l-10 5" stroke="#a8acae" stroke-width="2.500"/></svg><em>1</em></button>
  <span class="sep"></span>
  <button class="app on" aria-label="Blender"><svg viewBox="0 0 40 40"><path d="M7 11h19l-6-5q-2-3 2-2l15 13-2 17-15 2-5-9-11 8q-5 0-3-4l14-12H8q-4-3-1-8z" fill="#ec7812"/><circle cx="26" cy="24" r="13.500" fill="#ec7812"/><circle cx="26.500" cy="23" r="8.500" fill="#fff"/><circle cx="26.500" cy="23" r="5.300" fill="#1f5490"/></svg></button>
  <span class="sep"></span>
  <button class="app" aria-label="Trash"><svg viewBox="0 0 40 40"><path d="M4 5h32l-6 33q-10 4-20 0z" fill="url(#gTrash)" opacity=".9"/><path d="M4 6l4-5 5 3 4-4 5 3 5-3 4 4 4-1 1 4-8 3H11z" fill="#e8e8e6"/><path d="M10 3l3 3M18 2l2 4M27 3l-3 3M31 5l-3 2M15 5l1 2" stroke="#333" stroke-width="1.500"/><path d="M21 5l3 1M12 7l2 1" stroke="#3a8ad0" stroke-width="1.500"/></svg></button>
</nav>
</body>
</html>
```
FILE: styles.css
```css
* { box-sizing: border-box; }
body { margin: 0; height: 100vh; overflow: hidden; display: flex; flex-direction: column; background: #020203; color: #d8d8d8; font: 11px/16px "DejaVu Sans Condensed", "DejaVu Sans", sans-serif; }
button, input, select { font: inherit; color: inherit; border: 0; padding: 0; margin: 0; background: none; border-radius: 0; text-shadow: inherit; min-width: 0; }
h1, h2, h3, h4, p, ul { margin: 0; padding: 0; font-weight: normal; list-style: none; }
svg { flex: none; display: block; }
.defs { position: absolute; width: 0; height: 0; }

/* system menu bar */
.menubar { height: 23px; flex: none; display: flex; align-items: center; padding: 0 22px 0 20px; background: linear-gradient(90deg, #121117, #221e22 50%, #100f14); color: #f4f4f4; font: 500 14px/22px Inter, sans-serif; }
.menubar .apple { width: 15px; height: 17px; margin-right: 19px; }
.menubar strong { font-weight: 700; margin-right: 18px; }
.tray { margin-left: auto; display: flex; align-items: center; }
.tray svg { margin-left: 13px; }
.charge { font-size: 12px; margin-left: 12px; }
.tray .battery { margin-left: 4px; }
.clock { margin-left: 18px; margin-right: 6px; }
.tray svg:last-child { margin-left: 11px; }

/* window frame */
.window { flex: 1; min-height: 0; display: flex; flex-direction: column; background: #1f1f1f; border: 1px solid #606060; border-bottom-color: #4a4a4a; border-right: 0; border-radius: 6px; overflow: hidden; text-shadow: 0 1px 1px rgba(0, 0, 0, .5); }
.titlebar { position: relative; height: 21px; flex: none; display: flex; align-items: center; justify-content: center; gap: 6px; background: linear-gradient(#3c3c39, #333330); border-bottom: 1px solid #000; font-family: Inter, sans-serif; color: #a9a9a7; }
.titlebar h1 { font-size: 13px; font-weight: 400; }
.lights { position: absolute; left: 7px; top: 4px; display: flex; gap: 8px; }
.light { width: 12px; height: 12px; border-radius: 50%; }
.light.red { background: radial-gradient(circle, #8c0a08 2px, #fc4b48 3px); }
.light.yellow { background: #fdb827; }
.light.green { background: #1dc734; }

.topbar { height: 28px; flex: none; display: flex; background: #232323; padding: 0 8px 0 6px; }
.menus { display: flex; align-items: center; gap: 16px; }
.logo { margin-right: -9px; color: #ccc; }
.tabs { display: flex; align-items: stretch; gap: 2px; padding: 6px 0 2px; margin-left: 24px; }
.tabs button { padding: 0 9px; background: #2b2b2b; color: #999; border-radius: 4px 4px 0 0; }
.tabs .active { background: #424242; color: #fff; }
.tabs .plus { padding: 0 4px; }
.blocks { margin-left: auto; display: flex; gap: 6px; padding-top: 3px; }

/* shared controls */
select { appearance: none; background: #2a2a2a url("data:image/svg+xml,%3Csvg xmlns='http://www.w3.org/2000/svg' width='8' height='6'%3E%3Cpath d='M1 1l3 3 3-3' fill='none' stroke='%23aaa' stroke-width='1.500'/%3E%3C/svg%3E") no-repeat right 2px center; border-radius: 4px; }
.group { display: flex; height: 19px; gap: 1px; background: #383838; border: 1px solid #383838; border-radius: 4px; overflow: hidden; }
.group input { background: #1d1d1d; padding: 0 7px; flex: 1; }
.pick { width: 30px; height: 18px; flex: none; display: flex; align-items: center; padding-left: 3px; border-radius: 4px; background: #2a2a2a url("data:image/svg+xml,%3Csvg xmlns='http://www.w3.org/2000/svg' width='8' height='6'%3E%3Cpath d='M1 1l3 3 3-3' fill='none' stroke='%23aaa' stroke-width='1.500'/%3E%3C/svg%3E") no-repeat right 2px center; }
.group .pick { border-radius: 0; }
.pick svg, .sq svg, .bare svg, .crumb { width: 16px; height: 16px; }
.sq { width: 19px; display: flex; align-items: center; justify-content: center; background: #545454; color: #e6e6e6; flex: none; }
.sq.off { background: #303030; color: #777; }
.sq.users { width: 23px; }
.dim { color: #9a9a9a; }
.scene { width: 191px; }
.bare { color: #999; }
.toolbar { height: 25px; flex: none; display: flex; align-items: center; background: #424242; padding: 1px 8px 0; }
.mode, .slot { background-color: #2a2a2a; border: 1px solid #383838; border-radius: 4px; height: 19px; }
.mode { display: flex; align-items: center; width: 87px; margin-left: 7px; padding-left: 3px; }
.mode svg { width: 15px; height: 15px; }
.mode select { flex: 1; padding-left: 6px; }
.slot { width: 79px; margin-left: 29px; padding-left: 6px; }
.links { display: flex; gap: 15px; margin-left: 14px; }
.check { display: flex; align-items: center; gap: 8px; margin-left: 18px; color: #eee; }
input[type=checkbox] { appearance: none; width: 13px; height: 13px; border-radius: 3px; background: #545454; }
input[type=checkbox]:checked { background: #4f78ba url("data:image/svg+xml,%3Csvg xmlns='http://www.w3.org/2000/svg' viewBox='0 0 12 12'%3E%3Cpath d='M2 6l3 3 5-7' fill='none' stroke='%23fff' stroke-width='1.600'/%3E%3C/svg%3E"); }
.mat { width: 236px; margin: 0 8px 0 6px; }
.toolbar .right { margin-left: auto; display: flex; gap: 7px; }
.solo { height: 18px; border-radius: 4px; }

.areas { flex: 1; min-height: 0; display: flex; gap: 3px; }
.editor { flex: 1; min-width: 0; display: flex; flex-direction: column; border-radius: 5px; overflow: hidden; }
.canvas { position: relative; flex: 1; overflow: hidden; background: #232323; }
.grid { position: absolute; inset: 0; }
.wire { fill: none; stroke: #868686; stroke-width: 3; }
#wires { stroke-width: inherit; }
.caption { position: absolute; left: 29px; bottom: 26px; color: #fff; }
.edge { position: absolute; top: 13px; width: 8px; height: 16px; background: #1b1b1b; color: #999; display: flex; align-items: center; justify-content: center; }
.edge svg { width: 6px; height: 10px; }
.edge.left { left: 0; border-radius: 0 5px 5px 0; }
.edge.rightside { right: 0; border-radius: 5px 0 0 5px; }

/* nodes: placed freely on the canvas */
.node { position: absolute; border-radius: 4px; background: #3f3f3f; box-shadow: 0 1px 5px 1px rgba(0, 0, 0, .65); font-size: 8px; line-height: 13px; color: #dedede; }
.node h2 { height: 15px; display: flex; align-items: center; gap: 4px; padding-left: 7px; border-radius: 4px 4px 0 0; font-size: 8px; white-space: nowrap; }
.node h2::before { content: ""; border: 3px solid transparent; border-top: 5px solid #ddd; border-bottom: 0; }
.texcoord { left: -5px; top: 227px; width: 102px; }
.mapping { left: 222px; top: 197px; width: 101px; }
.wave { left: 333px; top: 367px; width: 109px; }
.musgrave { left: 492px; top: 222px; width: 109px; }
.ramp { left: 658px; top: 238px; width: 174px; }
.bsdf { left: 901px; top: 209px; width: 174px; }
.output { left: 1101px; top: 207px; width: 109px; }
.texcoord h2 { background: #a0343f; }
.mapping h2 { background: #6f58ae; }
.wave h2, .musgrave h2 { background: #a05f33; }
.ramp h2 { background: #4384ae; }
.bsdf h2 { background: #2e8f61; }
.output h2 { background: #802a34; }
.body { padding: 3px 8px 4px; }
.mapping .body { padding-bottom: 6px; }
.output .body { padding: 2px 8px 3px; }
.row { position: relative; height: 16px; display: flex; align-items: center; padding: 0 4px; white-space: nowrap; }
.row.tight { height: 15px; }
.row.tall { height: 18px; }
.row:has(> .field), .row:has(> select):not(.type) { padding: 0; }
.row.out { justify-content: flex-end; }
.row.in::before, .row.out::before, .triple::before { content: ""; position: absolute; top: calc(50% - 4px); width: 7px; height: 7px; border: 1px solid rgba(20, 20, 20, .6); border-radius: 50%; background: #a1a1a1; }
.row.in::before, .triple::before { left: -12px; }
.row.out::before { right: -12px; }
.row.blue::before, .triple::before { background: #6363c7; }
.row.yellow::before { background: #c7c729; }
.row.lime::before { background: #63c763; }
.triple::before { top: 10px; }
.space-1 { margin-top: 1px; }
.space-2 { margin-top: 2px; }
.space-3 { margin-top: 3px; }
.space-5 { margin-top: 5px; }
.node select { flex: 1; width: 100%; height: 13px; padding-left: 4px; border-radius: 3px; background-size: 7px 5px; background-position: right 1px center; }
.field { flex: 1; width: 100%; height: 13px; display: flex; align-items: center; padding: 0 10px 0 9px; background: #575757; border-radius: 3px; overflow: hidden; white-space: nowrap; }
.field input { flex: 1; width: 0; text-align: right; height: 13px; }
.slide { padding: 0 7px 0 6px; background: linear-gradient(#527cc0, #527cc0) no-repeat 0 0 / var(--fill) 100% #575757; }
.triple { position: relative; display: flex; flex-direction: column; gap: 1px; }
.triple .field { border-radius: 0; flex: none; }
.mapping .triple { height: 42px; }
.type { gap: 7px; padding-right: 0; }
.target { gap: 3px; }
.target, .instancer { padding-right: 0; }
.eyedrop { flex: 1; height: 13px; display: flex; justify-content: space-between; align-items: center; padding: 0 1px 0 2px; background: #1d1d1d; border-radius: 3px; }
.eyedrop svg { width: 11px; height: 11px; }
.instancer { gap: 5px; padding-left: 2px; }
.instancer input { width: 9px; height: 9px; border-radius: 1px; background: #5e5e5e; }
.color { justify-content: space-between; padding-right: 0; }
.swatch { appearance: none; width: 75px; height: 13px; border-radius: 3px; overflow: hidden; display: block; }
.swatch::-webkit-color-swatch-wrapper { padding: 0; }
.swatch::-webkit-color-swatch { border: 0; }
.swatch.full { width: 100%; }
.tools { display: flex; align-items: center; height: 14px; margin-top: 10px; padding-left: 3px; gap: 10px; }
.tools button svg { width: 8px; height: 8px; }
.tools button:nth-child(3) { margin-left: 4px; }
.pair { display: flex; flex: 1; gap: 1px; margin-left: 6px; }
.gradient { position: relative; height: 16px; margin: 3px 4px 8px; border: 1px solid #000; background: linear-gradient(90deg, #1c3ba2, #0b93d6 20%, #8cb5e0 32%, #b9cfea 42%, #fff 65%); }
.gradient::after { content: ""; position: absolute; left: 65.5%; top: 0; height: 8px; border-left: 1px dashed #000; }
.stop { position: absolute; top: 7px; width: 9px; height: 11px; margin-left: -5px; }
.navy { color: #20259a; }
.sky { color: #0b93d6; }
.white { color: #fff; }
.stopinfo { display: flex; gap: 8px; margin-bottom: 5px; }
.index { width: 44px; height: 13px; padding-right: 4px; text-align: center; background: #575757; border-radius: 3px; }

/* right column */
.side { width: 248px; flex: none; display: flex; flex-direction: column; gap: 4px; }
.outliner { height: 129px; flex: none; display: flex; flex-direction: column; border-radius: 5px; overflow: hidden; }
.side .toolbar { background: #393939; padding-top: 0; }
.side .toolbar .pick { box-shadow: 0 0 0 1px #404040; }
.outliner .pick + .pick { margin-left: 7px; }
.search { flex: 1; display: flex; align-items: center; height: 18px; margin: 0 18px; padding-left: 3px; background: #1d1d1d; border-radius: 4px; }
.search svg { width: 15px; height: 15px; }
.search input { flex: 1; width: 0; }
.filter { margin-right: -10px; }
.treebox { flex: 1; overflow: hidden; background: #282828; }
.tree { margin-top: -5px; }
.tree li { position: relative; display: flex; align-items: center; height: 20px; padding: 0 10px 0 26px; color: #bebebe; }
.tree li:nth-child(odd) { background: #2c2c2c; }
.tree li.deep { padding-left: 46px; }
.tree li::before { content: ""; position: absolute; left: 29px; top: 0; bottom: 0; border-left: 1px solid #666; }
.tree li.deep::after { content: ""; position: absolute; left: 49px; top: 0; height: 20px; border-left: 1px solid #666; }
.tree li.sun::after { height: 10px; }
.tree i { width: 16px; height: 7px; padding-left: 1px; background: linear-gradient(#666, #666) no-repeat 0 3px / 100% 1px; }
.tree i::before { content: ""; display: block; width: 0; border: 3px solid transparent; border-left: 6px solid #bbb; border-right: 0; }
.tree svg { width: 15px; height: 15px; }
.tree span { margin: 0 24px 0 7px; }
.tree .steel + .teal { margin-left: 5px; }
.tree svg.eye { width: 16px; height: 16px; margin-left: auto; color: #ddd; }
.orange { color: #cd8350; }
.steel { color: #6386c4; }
.teal { color: #00b27d; }

.props { flex: 1; min-height: 0; display: flex; flex-direction: column; border-radius: 5px; overflow: hidden; }
.props .crumb { margin: 0 7px 0 15px; }
.props .bare { margin-left: auto; }
.split { flex: 1; display: flex; min-height: 0; }
.strip { width: 28px; padding: 9px 0 0 2px; background: #212121; display: flex; flex-direction: column; gap: 1px; }
.strip button { height: 27px; flex: none; display: flex; align-items: center; justify-content: center; background: #2b2b2b; border-radius: 4px 0 0 4px; color: #c8c8c8; }
.strip svg { width: 16px; height: 16px; }
.strip button.first { margin-top: 8px; }
.strip button.active { background: #424242; }
.strip .rose { color: #c5626b; }
.strip .amber { color: #ec9a58; }
.strip .azure { color: #6a96d8; }
.strip .teal { color: #00b27d; }
.solid { stroke-width: 2; }
.panels { flex: 1; background: #424242; padding-top: 9px; }
.datablock { margin: 0 9px 8px; background: #2a2a2a; border: 0; }
.panels h3 { height: 24px; display: flex; align-items: center; gap: 6px; padding: 0 3px 0 9px; font-size: 12px; color: #cecece; }
.panels h3::before, .transform h4::before { content: ""; border: 4px solid transparent; border-left: 7px solid #a5a5a5; border-right: 0; }
.panels h3.open::before { border: 4px solid transparent; border-top: 7px solid #a5a5a5; border-bottom: 0; }
.panels h3 svg { width: 12px; height: 6px; margin: 0 5px 0 auto; }
.transform { background: #383838; padding: 9px 0 0; display: flex; flex-direction: column; gap: 8px; }
.vector { display: flex; flex-direction: column; }
.line { display: flex; align-items: center; height: 19px; }
.line.single { height: 18px; }
.line label { width: 92px; text-align: right; margin-right: 9px; }
.line input, .line select { width: 70px; height: 100%; }
.line input { background: #575757; text-align: center; border-bottom: 1px solid #3c3c3c; }
.vector .line:first-child input { border-top-left-radius: 4px; }
.vector .line:last-child input { border-bottom-left-radius: 4px; }
.line select { padding-left: 6px; border: 1px solid #404040; }
.line svg { width: 15px; height: 15px; margin-left: 3px; color: #999; }
.line b { width: 4px; height: 4px; border-radius: 50%; background: #d0d0d0; margin: 0 16px 0 auto; }
.transform h4 { height: 24px; display: flex; align-items: center; gap: 6px; padding-left: 23px; margin-top: 2px; }

.status { height: 20px; flex: none; display: flex; align-items: center; background: #2e2e2e; border-top: 1px solid #222; color: #a6a6a6; padding: 0 29px 0 10px; }
.hint { width: 236px; display: flex; align-items: center; gap: 11px; }
.hint svg { width: 12px; height: 15px; }
.status span { margin-left: auto; white-space: nowrap; }

/* dock */
.dock { height: 60px; flex: none; margin: 0 39px; padding: 0 3px; display: flex; background: linear-gradient(90deg, #101012, #1b1716 15%, #15161b 35%, #1d2430 52%, #14161b 65%, #101113); border: 1px solid #3a3a3c; border-bottom: 0; border-radius: 5px 5px 0 0; }
.app { position: relative; flex: 1; display: flex; justify-content: center; padding-top: 6px; align-items: flex-start; }
.app > svg { width: 40px; height: 40px; }
.app.on::after { content: ""; position: absolute; top: 53px; left: calc(50% - 2px); width: 4px; height: 4px; border-radius: 50%; background: #8c8c8c; }
.app em { position: absolute; top: 3px; right: 0; width: 18px; height: 18px; border-radius: 50%; background: #f2342c; color: #fff; font: 11px/18px Inter, sans-serif; }
.sep { width: 22px; flex: none; height: 50px; margin-top: 5px; background: linear-gradient(#444, #444) no-repeat center / 1px 100%; }
.month, .day, .three { text-anchor: middle; font-family: Inter, sans-serif; fill: #fff; }
.month { font-size: 8px; }
.day { font-size: 19px; fill: #222; }
.three { font-size: 7px; fill: #345; }
.prompt { font: bold 9px "DejaVu Sans Mono", monospace; fill: #eee; }
.tv { font: 600 13px Inter, sans-serif; fill: #fff; }
```
